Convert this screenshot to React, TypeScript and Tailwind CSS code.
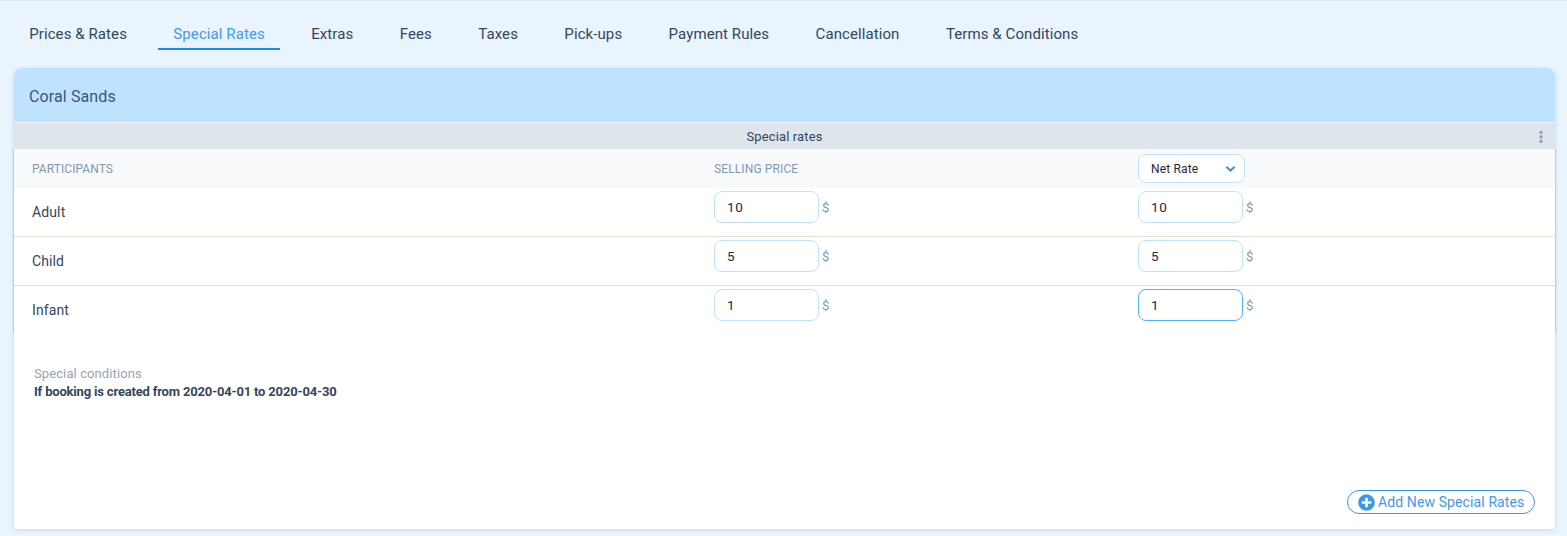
import { FaPlusCircle } from "react-icons/fa";

const tabs = [
  "Prices & Rates",
  "Special Rates",
  "Extras",
  "Fees",
  "Taxes",
  "Pick-ups",
  "Payment Rules",
  "Cancellation",
  "Terms & Conditions",
];

const rows = [
  { name: "Adult", selling: "10", net: "10" },
  { name: "Child", selling: "5", net: "5" },
  { name: "Infant", selling: "1", net: "1", active: true },
];

function PriceField({ value, active }: { value: string; active?: boolean }) {
  return (
    <div className="flex items-center pt-[3px]">
      <input
        defaultValue={value}
        className={`h-8 w-[105px] rounded-[8px] border bg-white pb-px pl-3 text-[13.5px] tracking-[0.6px] text-[#212b36] outline-none ${
          active ? "border-[#4db5f5]" : "border-[#bfe3fd]"
        }`}
      />
      <span className="ml-[3px] pt-[2px] text-[13px] text-[#8299ad]">$</span>
    </div>
  );
}

export default function App() {
  return (
    <div className="flex h-[536px] w-[1567px] flex-col overflow-hidden border-t border-[#dde6ee] bg-[#e9f4ff] font-['Roboto',sans-serif] text-[#33475b]">
      <nav className="flex h-[48px] shrink-0 gap-4 pl-[14px] pt-[17px]">
        {tabs.map((tab) => (
          <button
            key={tab}
            className={`h-[32px] whitespace-nowrap border-b-2 px-[15.2px] pt-[2px] text-[15px] leading-[28px] tracking-[0.09px] ${
              tab === "Special Rates"
                ? "border-[#1e8be6] text-[#4299ed]"
                : "border-transparent text-[#33475b]"
            }`}
          >
            {tab}
          </button>
        ))}
      </nav>

      <section className="ml-[14px] mt-[19px] flex h-[461px] w-[1541px] shrink-0 flex-col rounded-t-[8px] rounded-b-[2px] bg-white shadow-[0_1px_4px_rgba(60,90,120,0.18)]">
        <header className="flex h-[55px] shrink-0 items-center rounded-t-[8px] border-b border-[#edf5fb] bg-[#bfe3ff] px-[15px] pt-[4px] text-base tracking-[0.12px] text-[#33597f]">
          Coral Sands
        </header>

        <div className="grid h-[26px] shrink-0 grid-cols-[1fr_auto_1fr] items-center bg-[#dee5ec]">
          <span />
          <h2 className="pt-[2px] text-[13px] tracking-[0.12px]">Special rates</h2>
          <button aria-label="Options" className="mr-[12.5px] justify-self-end">
            <svg width="4" height="13" viewBox="0 0 4 13" fill="#94a3b6">
              <circle cx="2" cy="2.5" r="1.75" />
              <circle cx="2" cy="7" r="1.75" />
              <circle cx="2" cy="11.3" r="1.75" />
            </svg>
          </button>
        </div>

        <div className="shrink-0 shadow-[0_0_2px_rgba(40,70,100,0.45)] [clip-path:inset(0_-4px_0_-4px)]">
          <div className="grid h-[39px] grid-cols-[682px_424px_1fr] items-center bg-[#f7f9fb] pl-[18px] text-xs text-[#8299ad]">
            <span className="tracking-[0.07px]">PARTICIPANTS</span>
            <span className="tracking-[0.12px]">SELLING PRICE</span>
            <button className="flex h-[29px] w-[107px] items-center justify-between rounded-[8px] border border-[#bfe3fd] bg-white pl-3 pr-2 text-xs tracking-[0.15px] text-[#212b36]">
              Net Rate
              <svg width="11" height="8" viewBox="0 0 11 8" fill="none" stroke="#3897ee" strokeWidth="2.2">
                <path d="M1.3 1.7 5.5 5.6 9.7 1.7" />
              </svg>
            </button>
          </div>
          {rows.map((row) => (
            <div
              key={row.name}
              className="grid h-[49px] grid-cols-[682px_424px_1fr] items-start border-b border-[#dde3d2] bg-white pl-[18px] last:h-[48px] last:border-b-0"
            >
              <span className="pt-[14px] text-sm leading-5 tracking-[0.12px]">{row.name}</span>
              <PriceField value={row.selling} />
              <PriceField value={row.net} active={row.active} />
            </div>
          ))}
        </div>

        <div className="pl-5 pt-[31px] text-[13px] leading-[18px]">
          <p className="tracking-[0.1px] text-[#94a4b5]">Special conditions</p>
          <p className="font-bold tracking-[-0.18px]">
            If booking is created from 2020-04-01 to 2020-04-30
          </p>
        </div>

        <button className="mb-[15px] mr-5 mt-auto flex h-6 w-[188px] items-center self-end whitespace-nowrap rounded-full border border-[#3897ee] pl-[10px] text-sm tracking-[0.11px] text-[#4299ed]">
          <FaPlusCircle className="mr-[3px] size-[17px] shrink-0 text-[#3897ee]" />
          Add New Special Rates
        </button>
      </section>
    </div>
  );
}
